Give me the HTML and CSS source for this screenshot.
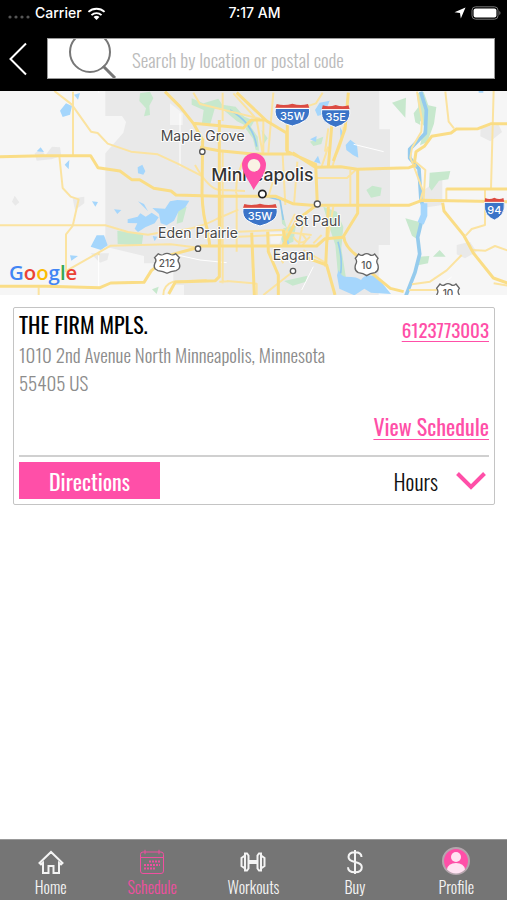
FILE: index.html
```html
<!DOCTYPE html>
<html lang="en">
<head>
<meta charset="utf-8">
<meta name="viewport" content="width=device-width, initial-scale=1">
<title>Locations</title>
<link rel="stylesheet" href="styles.css">
</head>
<body>
<header class="top">
  <div class="status">
    <div class="status-left">
      <svg class="dots" viewBox="0 0 22 6" aria-hidden="true"><circle cx="2" cy="3" r="1.6"/><circle cx="8" cy="3" r="1.6"/><circle cx="14" cy="3" r="1.6"/><circle cx="20" cy="3" r="1.6"/></svg>
      <span>Carrier</span>
      <svg class="wifi" viewBox="0 0 20 15" aria-hidden="true"><path d="M1.500 5.800a12.400 12.400 0 0 1 17 0M4.700 9.200a7.700 7.700 0 0 1 10.600 0"/><path class="solid" d="M10 14.300 6.900 11.300a4.400 4.400 0 0 1 6.200 0z"/></svg>
    </div>
    <time>7:17 AM</time>
    <div class="status-right">
      <svg class="arrow" viewBox="0 0 12 12" aria-hidden="true"><path d="M11.500.5 6.800 11.500 6 6 .5 5.200z"/></svg>
      <svg class="battery" viewBox="0 0 30 14" aria-hidden="true"><rect class="case" x="1" y=".8" width="26" height="12.400" rx="3.500"/><rect x="2.600" y="2.400" width="22.800" height="9.200" rx="2"/><path class="cap" d="M28.300 5v4q1.200-.6 1.200-2t-1.200-2z"/></svg>
    </div>
  </div>
  <div class="searchbar">
    <button class="back" type="button" aria-label="Back"><svg viewBox="0 0 18 34" aria-hidden="true"><path d="M17 1.500 1.500 17 17 32.500"/></svg></button>
    <label class="search">
      <svg viewBox="0 0 50 39" aria-hidden="true"><circle cx="23" cy="13" r="20"/><path class="handle" d="m36 27 12 12"/></svg>
      <input type="text" aria-label="Search" placeholder="Search by location or postal code">
    </label>
  </div>
</header>
<main>
  <svg class="map" viewBox="0 3 1521 612" role="img" aria-label="Map of Minneapolis">
    <defs>
      <g id="interstate">
        <path fill="#3b74c8" stroke="#fff" stroke-width="3" d="M-51-21Q-55 2-39 15-22 27 0 32 22 27 39 15 55 2 51-21z"/>
        <path fill="#dc4b42" d="M-47-34q23 6 47-1 24 7 47 1l4 12H-51z"/>
        <path stroke="#fff" stroke-width="3" d="M-51-21H51"/>
      </g>
      <path id="usroute" fill="#fff" stroke="#666" stroke-width="4" d="M-24-33q8 7 15 2 9-6 18 0 7 5 15-2l10 13q-7 8-1 18 6 18-8 25-15 2-25 9-10-7-25-9-14-7-8-25 6-10-1-18z"/>
    </defs>
    <rect y="0" width="1521" height="618" fill="#f6f6f6"/>
    <g class="urban">
      <path d="M316 0H1138V118h32v347h-34V618H520V520H432V498L316 470V190l54-62 8-32-12-18h-50z"/>
      <path d="M104 190l20-12 12 18 20-26 24 2 4 26-30 10-44 4zM36 335l8-18 14 20-12 10zM218 325l35-5v20l-28 20zM272 490h55l-5 20-22 8zM1442 112l54-8 10 22-35 28-30-15zM1272 300l55-40v85l-55 8zM1370 465l40-10 20 30-35 20-25-12z"/>
    </g>
    <g class="light">
      <path d="M510 40l38 30v35h-38zM810 427h42l-14 34h-26zM510 585h42v33h-42z"/>
    </g>
    <g class="green">
      <path d="M420 10l30-5 10 20-12 22 2 28-18 4 6-24-20-22zM352 422l78 10-5 36-72-6zM456 598l20-8-6 22z"/>
      <path d="M575 25l35 15 45-14 12 18 40 6 26 30 30 12-12 22-40-20-45-38-22 0-14 50-25-2 6-44-36-16zM745 100l28 40 4 42-10-2-8-34-22-30zM850 415l38-10-8 50-30 12-6-20zM852 573l70-16-4 18-40 12zM785 120l18 25-12 18zM930 155l40-15-6 22-24 6zM535 358l25-8-12 46-18 5zM842 345l18 68-14-12zM970 350l40 15 20 45-6 65 14 90-24-10-8-90-20-60z"/>
      <g transform="translate(1011 0)"><path d="M165 38l42-15-2 60zM240 10l20-4 14 40 24 5-7 50-20 55-22 10 14-55-16-22zM230 70l15-20 5 55-15-8zM88 300l18-13 28 6-4 24-28 6zM278 248l62-5-6 25-28 4-22 30-8-12zM205 385l45 12-10 50-15-10zM288 500l20-20 18 20zM245 500l32-2-4 22-30 6z"/></g>
    </g>
    <g class="water">
      <path d="M180 62l18-22 18 8-6 26-22 7zM222 14l18-5-6 20zM110 184l12-12 10 14zM194 224l14-14-2 28zM413 232l14-8 9 20-6 10-16-4zM276 334l18 2-8 14zM342 358l22 2-12 12zM414 334l18 8 12 22zM383 388l30-8 8-10 16 10 18-12 21 14-12 18-28 12-22 14-10-10 8-16-29-1zM457 354l38 2 15-22 22-4 36 2-12 20-20 12-14 28-22 14-18-6-5-28zM272 470l18-34 22 0 11 30-20 14zM210 496l24 2-20 14zM458 438l14 2-8 14z"/>
      <path d="M930 148l20-10-2 18zM942 215l12-18 8 24zM1020 112l12 20-10 20zM945 60l14-22 30-6-16 40-20 6zM850 455l14-8 4 14-12 8z"/>
      <g transform="translate(1011 0)"><path d="M26 165l14-16 20 16 4 38-16-8-20-15zM5 540q10 22 22 20 36 0 45 10 12-20 48-10l42 52-60-4-20-12-30 20-45-20-7-40zM425 0h14v8h-14z"/></g>
      <path class="river thin" d="M1014 455q14 50 8 95M690 60q70 40 80 110M800 320l40 10 10 60"/>
      <path class="river" d="M1262 5l17 55-3 70-47 48 0 26 28 33 6 95q15 23 2 60l-12 50 6 50-14 55-28 72"/>
      <path class="river wide" d="M1272 340v36l-10 24"/>
    </g>
    <g class="minor">
      <path d="M296 0v8M296 495v95M540 70v160M510 490l90 20 80 8M1061 163l90 22M940 530l-35 70M1295 605l60-44"/>
    </g>
    <g class="roads">
      <path d="M163 3l52 40 58 82 20 4 30 32 70 24 80 8 60 28 75 38M219 5v190M178 198l10 96 24 26 24 8-18 80-20 25v110M0 406h316l68 20 60 8 66-12M195 545l137-78 180-4 84 10M116 592v28M490 615q0-30 30-40l100-5M296 486v10"/>
      <path d="M585 225q40 70 70 74l80 4M510 425q90-10 140-38l65-28M580 8l20 34 180 44M668 8v85M700 10l70 78M770 90l18 100M820 8l-15 180M790 92v96M668 180v400M710 310v175M738 200q-30 45-30 110M770 195l-15 80M820 270l-15 50M848 195l8 150M892 215l-10 130M885 372l-35 70M915 370l-20 100M940 460l25-25M850 425l85 10M715 425l140-6M715 440l135-6M880 440q20 35 50 0M905 430l15 20-15 20M910 480l70 40M825 480l25 40M680 573l90 8v34M658 575l30-1M885 540l-95 75M1000 350l-18 105M985 170l-20 60M985 115l-10 70M968 8l-20 32-60 20"/>
      <g transform="translate(1011 0)">
        <path d="M325 5l10 90 16 20M470 0l-8 295M328 295v38M240 5l15 85-2 35-28 48-5 30 10 25 28 75-8 28M235 215l30 25-5 90M444 300v105l-40 12-18 20M406 480l40 2 28-14 40 14M374 495l-45 46-50 34-54 8M470 580l50 8M216 600h84M-60 264h90l30-28M40 240v105M20 110q0 40-25 90l-10 34"/>
      </g>
    </g>
    <g class="major">
      <path d="M0 200l130-3h142l22 36 66 10 35 26 24 0 42 26 52 8 15 12 130 4h170l50 22 75 6M0 589l140 0 160 4 32-14 100-2 22-35 60-48 75-20"/>
      <path d="M495 5l45 45 40 50 28 50-2 160q2 70 18 115l5 40M580 100l150 14 24-24 42 0M710 8l90 85 60 36v55M600 172l58 10 100 10h120M658 90v230M658 320v240l-12 12-120 4-20 36M862 100v85l85 38 5 120M878 188l70 45M862 60v60M660 320v150M600 468h350l25-22 55-4M755 428l8 187M803 425l2 60 30 70v60M850 420l8 45M850 465l40-75 62-46M985 350l-8 180M910 500l70 25 25 90M1045 8l-10 110-35 95M1000 50l-15 180"/>
      <g transform="translate(1011 0)">
        <path d="M-65 232l76-2 50 8 155-5 22-8M232 220l5-35 25-16 22-30 58-10 16-12 65-1 40-15h50M-65 346h280l40-15 255 4M328 297h185M317 338l4 25 60 74 28 52 60 75 45 16M62 240v130l-42 68q2 35 50 66M105 550l55 45 40 10"/>
      </g>
    </g>
    <g class="places">
      <circle cx="607" cy="185" r="8"/><circle cx="594" cy="476" r="8"/><circle cx="952" cy="342" r="9"/><circle cx="879" cy="543" r="8"/><circle class="city" cx="787" cy="312" r="11"/>
      <text x="608" y="152">Maple Grove</text>
      <text class="big" x="787" y="274">Minneapolis</text>
      <text x="594" y="443">Eden Prairie</text>
      <text x="953" y="409">St Paul</text>
      <text x="880" y="510">Eagan</text>
    </g>
    <g class="shields">
      <use href="#interstate" x="877" y="76"/><text x="877" y="90">35W</text>
      <use href="#interstate" transform="translate(1007 80) scale(.82 1)"/><text x="1007" y="94">35E</text>
      <use href="#interstate" x="780" y="376"/><text x="780" y="390">35W</text>
      <use href="#interstate" transform="translate(1483 358) scale(.58 1)"/><text x="1483" y="371">94</text>
      <use href="#usroute" transform="translate(501 521) scale(1.100 .9)"/><text class="us" x="501" y="532">212</text>
      <use href="#usroute" x="1100" y="525"/><text class="us" x="1100" y="536">10</text>
      <use href="#usroute" x="1344" y="615"/><text class="us" x="1344" y="622">10</text>
    </g>
    <circle cx="762" cy="226" r="18" fill="#faf3e4"/>
    <path class="pin" fill-rule="evenodd" d="M761 300c-8-20-35-48-35-75a36 36 0 0 1 72 0c0 27-27 55-37 75zM762 207a19 19 0 1 0 .1 0z"/>
    <text class="google" x="27" y="571"><tspan fill="#4285f4">G</tspan><tspan fill="#ea4335">o</tspan><tspan fill="#fbbc05">o</tspan><tspan fill="#4285f4">g</tspan><tspan fill="#34a853">l</tspan><tspan fill="#ea4335">e</tspan></text>
  </svg>
  <article class="card">
    <div class="info">
      <div class="place">
        <h1>THE FIRM MPLS.</h1>
        <address>1010 2nd Avenue North Minneapolis, Minnesota 55405 US</address>
      </div>
      <div class="links">
        <a href="tel:6123773003">6123773003</a>
        <a class="view" href="#schedule">View Schedule</a>
      </div>
    </div>
    <div class="actions">
      <button class="directions" type="button">Directions</button>
      <button class="hours" type="button">Hours <svg viewBox="0 0 30 18" aria-hidden="true"><path d="m1.500 1.500 13.500 13.500 13.500-13.500"/></svg></button>
    </div>
  </article>
</main>
<nav class="tabs">
  <a href="#home"><svg viewBox="0 0 26 26" aria-hidden="true"><path d="M1.500 14 13 3l11.500 11-1.500 1.500-2-1.700V24h-5.500v-7h-5v7H5V13.800l-2 1.700z"/></svg>Home</a>
  <a class="active" href="#schedule"><svg viewBox="0 0 26 26" aria-hidden="true"><rect x="1.500" y="3" width="23" height="21.500" rx="2.500"/><path d="M1.500 8.500h23M6 .8v4.400M20 .8v4.400"/><path class="days" d="M10 12.500h11M5 16h16M5 19.500h12"/></svg>Schedule</a>
  <a href="#workouts"><svg viewBox="0 0 26 26" aria-hidden="true"><path d="M8.500 12h9v2h-9zM5 4.500h2l1.500 2v13l-1.500 2H5zM21 4.500H19l-1.500 2v13l1.500 2h2zM5 6.500 1.500 9v8L5 19.500M21 6.500 24.500 9v8L21 19.500"/></svg>Workouts</a>
  <a href="#buy"><svg viewBox="0 0 26 26" aria-hidden="true"><path d="M13 1v24M19.500 8c0-3-2.500-4.800-6.500-4.800S6.500 5 6.500 8s2.500 4.200 6.500 5 6.800 2 6.800 5.200-2.800 5-6.800 5-7-1.800-7-5"/></svg>Buy</a>
  <a href="#profile"><svg class="avatar" viewBox="0 0 28 28" aria-hidden="true"><circle cx="14" cy="14" r="13" fill="#ff4fa8" stroke="#b5a5ad"/><circle cx="14" cy="10" r="5" fill="#ffe3f2"/><path fill="#ffe3f2" d="M5 22.500q1-6.500 9-6.500t9 6.500Q19 26.500 14 26.500T5 22.500z"/></svg>Profile</a>
</nav>
</body>
</html>
```
FILE: styles.css
```css
* { box-sizing: border-box; }
body {
  margin: 0;
  min-height: 100vh;
  display: flex;
  flex-direction: column;
  background: #fff;
  font-family: Oswald, "Liberation Sans Narrow", "Roboto Condensed", sans-serif;
  font-size: 19px;
  font-weight: 300;
}
svg { display: block; fill: none; }
button { border: 0; padding: 0; background: none; font: inherit; }
main { flex: 1; }

.top { background: #000; padding-bottom: 12px; }
.status {
  display: grid;
  grid-template-columns: 1fr auto 1fr;
  align-items: center;
  height: 26px;
  padding: 0 6px 0 8px;
  color: #fff;
  font: 500 14px/26px Inter, sans-serif;
}
.status-left, .status-right { display: flex; align-items: center; gap: 5px; }
.status-right { justify-content: flex-end; }
.dots { width: 22px; height: 6px; margin-top: 8px; fill: #555; }
.wifi { width: 19px; height: 15px; stroke: #fff; stroke-width: 2; }
.wifi .solid { fill: #fff; stroke: none; }
.arrow { width: 12px; fill: #fff; }
.battery { width: 30px; fill: #fff; }
.battery .case { fill: none; stroke: #777; stroke-width: 1; }
.battery .cap { fill: #777; }

.searchbar { display: flex; align-items: center; gap: 20px; padding: 12px 12px 0 9px; }
.back svg { width: 18px; height: 34px; stroke: #fff; stroke-width: 2; }
.search {
  flex: 1;
  display: flex;
  align-items: center;
  height: 41px;
  border: 1px solid #999;
  background: #fff;
  overflow: hidden;
}
.search svg { flex: none; width: 50px; height: 39px; margin-left: 19px; stroke: #777; stroke-width: 2; }
.search .handle { stroke-width: 3; }
.search input {
  flex: 1;
  min-width: 0;
  height: 36px;
  border: 0;
  outline: 0;
  padding: 0 0 0 15px;
  background: none;
  font: inherit;
}
.search input::placeholder { color: #bbb; }

.map { width: 100%; height: auto; font-family: Inter, sans-serif; }
.urban { fill: #e9e9e9; }
.light { fill: #f4f4f4; }
.green { fill: #c7e8cd; }
.water { fill: #a5d6fc; }
.river { fill: none; stroke: #95cbed; stroke-width: 11; stroke-linejoin: round; }
.wide { stroke-width: 20; stroke: #a5d6fc; }
.thin { stroke-width: 5; }
.minor { stroke: #fff; stroke-width: 3; }
.roads, .major { stroke: #fbe3a0; stroke-width: 6; stroke-linejoin: round; }
.major { stroke: #fadd86; stroke-width: 9; }
.places { fill: #484848; font-size: 42px; font-weight: 400; text-anchor: middle; }
.places text { stroke: #fff; stroke-width: 6; paint-order: stroke; stroke-linejoin: round; }
.places circle { fill: #fff; stroke: #555; stroke-width: 4; }
.places .city { stroke: #222; stroke-width: 5; }
.places .big { font-size: 53px; font-weight: 500; fill: #333; }
.shields { font-size: 33px; font-weight: 500; fill: #fff; text-anchor: middle; }
.shields .us { fill: #555; font-size: 30px; }
.pin { fill: #ff4fa8; }
.google { font: 600 61px "Open Sans", sans-serif; }

.card {
  margin: 12px 12px 0 13px;
  padding: 0 5px 5px;
  border: 1px solid #c4c4c4;
  border-radius: 2px;
}
.info {
  display: flex;
  justify-content: space-between;
  min-height: 149px;
  border-bottom: 2px solid #d0d0d0;
}
.place { flex: 1; }
h1 { margin: 0; font-size: 22px; font-weight: 400; line-height: 32px; color: #000; }
address { max-width: 320px; font-style: normal; line-height: 28px; color: #8c8c8c; }
.links {
  display: flex;
  flex-direction: column;
  align-items: flex-end;
  justify-content: space-between;
  padding: 7px 0 15px;
}
.links a { color: #ff4fa8; font-weight: 400; line-height: 28px; text-underline-offset: 3px; text-decoration-thickness: 1px; }
.links .view { font-size: 22px; }
.actions { display: flex; align-items: center; justify-content: space-between; padding-top: 5px; }
.directions { width: 141px; height: 37px; background: #ff4fa8; color: #fff; font-size: 22px; font-weight: 400; }
.hours { display: flex; align-items: center; gap: 18px; padding-right: 3px; font-size: 22px; color: #111; }
.hours svg { width: 30px; height: 18px; stroke: #ff4fa8; stroke-width: 4; }

.tabs {
  display: grid;
  grid-template-columns: repeat(5, 1fr);
  height: 61px;
  background: #757575;
  border-top: 1px solid #999;
}
.tabs a {
  display: flex;
  flex-direction: column;
  align-items: center;
  padding-top: 9px;
  color: #f4f4f4;
  text-decoration: none;
  font-size: 16px;
  line-height: 25px;
}
.tabs svg { width: 26px; height: 26px; stroke: currentColor; stroke-width: 2; }
.tabs .active { color: #f04fa0; }
.tabs .active svg { stroke-width: 1; }
.tabs .active .days { stroke-width: 2; stroke-dasharray: 2 1; }
.tabs .avatar { width: 28px; height: 28px; margin-top: -2px; stroke: none; }
```
